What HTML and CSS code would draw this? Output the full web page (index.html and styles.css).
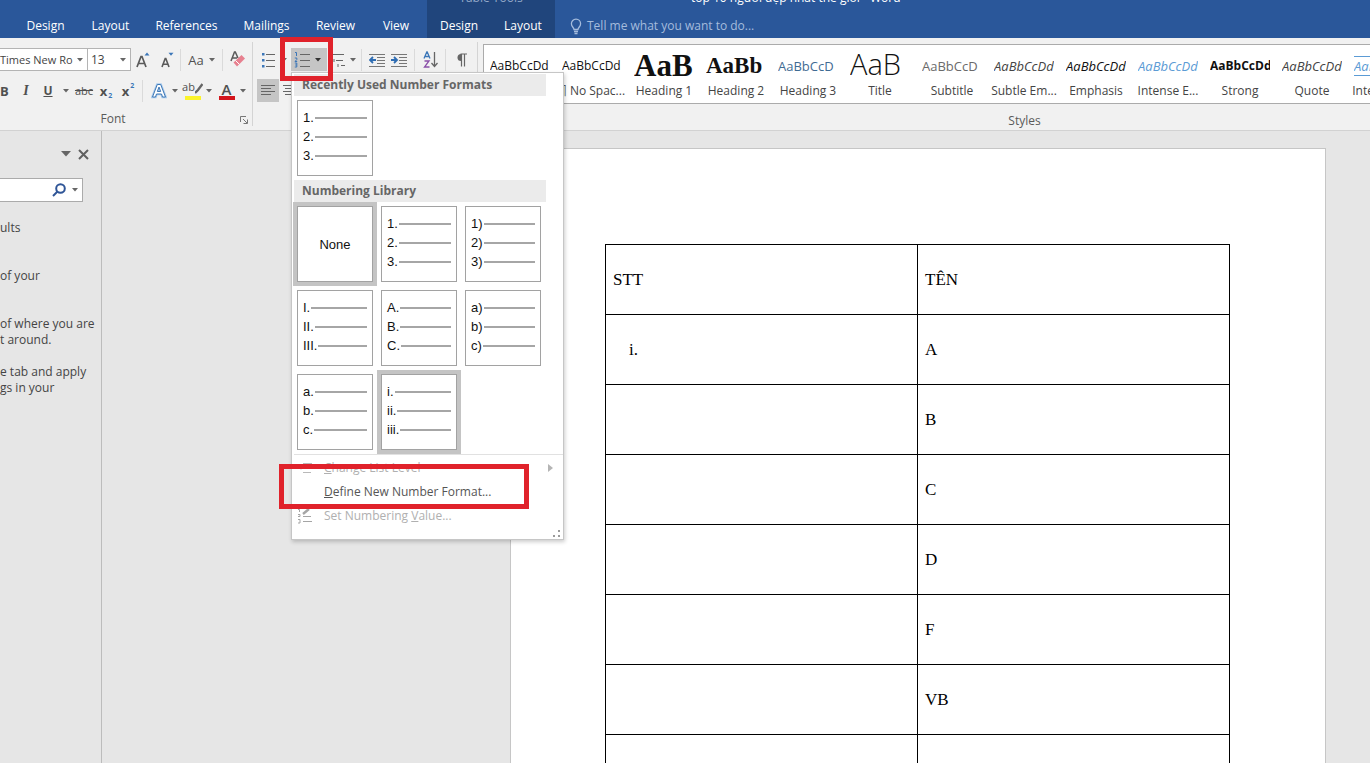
FILE: index.html
```html
<!DOCTYPE html>
<html lang="en">
<head>
<meta charset="utf-8">
<title>top 10 người đẹp nhất thế giới - Word</title>
<link rel="stylesheet" href="styles.css">
</head>
<body>
<svg class="defs" aria-hidden="true">
  <symbol id="caret" viewBox="0 0 6 4"><path d="M0 0h6L3 3.5z" fill="currentColor"/></symbol>
</svg>

<header class="titlebar">
  <nav class="tabs">
    <button class="tab">Design</button>
    <button class="tab">Layout</button>
    <button class="tab tab-xl">References</button>
    <button class="tab tab-lg">Mailings</button>
    <button class="tab">Review</button>
    <button class="tab tab-sm">View</button>
  </nav>
  <div class="context">
    <div class="cut-line context-name"><span>Table Tools</span></div>
    <div class="context-tabs">
      <button class="tab">Design</button>
      <button class="tab">Layout</button>
    </div>
  </div>
  <div class="title-area">
    <div class="cut-line doc-title"><span>top 10 người đẹp nhất thế giới - Word</span></div>
    <button class="tell-me">
      <svg width="12" height="17" viewBox="0 0 12 17" fill="none" stroke="currentColor" stroke-width="1.3"><path d="M4 11.5c0-2-2.600-2.700-2.600-5.700a4.600 4.600 0 0 1 9.200 0c0 3-2.600 3.700-2.600 5.700zM4 13.500h4M4.500 15.500h3"/></svg>
      <span>Tell me what you want to do...</span>
    </button>
  </div>
</header>

<section class="ribbon">
  <div class="group font-group">
    <div class="row">
      <label class="combo combo-font"><select aria-label="Font"><option>Times New Ro</option></select><svg class="caret"><use href="#caret"/></svg></label>
      <label class="combo combo-size"><select aria-label="Font size"><option>13</option></select><svg class="caret"><use href="#caret"/></svg></label>
      <button class="tool w24" aria-label="Grow font"><svg width="14" height="16" viewBox="0 0 14 16"><path d="M1 15 5 4.500h1L10 15M2.500 11.500h6" fill="none" stroke="#5a5a5a" stroke-width="1.700"/><path d="M8.500 3.500 11 .5l2.500 3z" fill="#3b76b8"/></svg></button>
      <button class="tool w24" aria-label="Shrink font"><svg width="14" height="16" viewBox="0 0 14 16"><path d="M2 15 5.200 6.500h.6L9 15M3 12.200h5" fill="none" stroke="#5a5a5a" stroke-width="1.600"/><path d="M8.500.8h5L11 3.800z" fill="#3b76b8"/></svg></button>
      <span class="sep"></span>
      <button class="tool w41 case">Aa<svg class="caret"><use href="#caret"/></svg></button>
      <span class="sep"></span>
      <button class="tool w30" aria-label="Clear formatting"><svg width="16" height="17" viewBox="0 0 16 17"><path d="M1 10 4.500 1h.8L8 7M2.500 7H7" fill="none" stroke="#5a5a5a" stroke-width="1.500"/><path d="m3.500 11.500 8-7.500 3.500 3.500-8 8z" fill="#e7808f"/><path d="m5.500 9.500 4 4" stroke="#fff"/></svg></button>
    </div>
    <div class="row">
      <button class="tool w15 glyph-b">B</button>
      <button class="tool w22 glyph-i">I</button>
      <button class="tool w22 glyph-u">U</button>
      <button class="tool w14" aria-label="Underline style"><svg class="caret"><use href="#caret"/></svg></button>
      <button class="tool w22 glyph-abc">abc</button>
      <button class="tool w22 glyph-x">x<sub>2</sub></button>
      <button class="tool w22 glyph-x">x<sup>2</sup></button>
      <span class="sep sep-wide"></span>
      <button class="tool w34" aria-label="Text effects"><svg width="16" height="16" viewBox="0 0 16 16"><path d="M1.500 14 6.300 1.500h3.400L14.500 14h-3l-1-3h-5l-1 3zM6.300 8.500h3.400L8 4z" fill="#fff" stroke="#a9cbee" stroke-width="2.600"/><path d="M1.500 14 6.300 1.500h3.400L14.500 14h-3l-1-3h-5l-1 3zM6.300 8.500h3.400L8 4z" fill="#fff" stroke="#3f78b5"/></svg><svg class="caret"><use href="#caret"/></svg></button>
      <button class="tool w34" aria-label="Text highlight colour"><span class="swatch yellow"><span>ab</span><svg width="8" height="12" viewBox="0 0 8 12"><path d="M7.500 2 3 8 0 11" stroke="#666" stroke-width="2.400" fill="none"/></svg></span><svg class="caret"><use href="#caret"/></svg></button>
      <button class="tool w34" aria-label="Font colour"><span class="swatch red">A</span><svg class="caret"><use href="#caret"/></svg></button>
    </div>
    <div class="caption"><span>Font</span><button class="launcher" aria-label="Font settings"><svg width="8" height="8" viewBox="0 0 8 8" fill="none" stroke="#777"><path d="M.5 6V.5H6M3 3l4 4M7.500 3.500v4h-4"/></svg></button></div>
  </div>

  <div class="group para-group">
    <div class="row">
      <button class="tool w34" aria-label="Bullets"><svg width="15" height="16" viewBox="0 0 15 16"><path d="M5 2.500h9M5 8.500h9M5 14.500h9" stroke="#666"/><path d="M1 1h2.500v2.500H1zM1 7h2.500v2.500H1zM1 13h2.500v2.500H1z" fill="#3b76b8"/></svg><svg class="caret"><use href="#caret"/></svg></button>
      <div class="numbering">
        <button class="tool pressed numbering-btn" aria-label="Numbering" aria-expanded="true"><svg width="16" height="17" viewBox="0 0 16 17"><path d="M6 3.500h10M6 9.500h10M6 15.500h10" stroke="#666"/><path d="M1 1.500h1.500V5M.8 7h2v1.500L1 10.500h2.200M.8 12h2v4H.8M1.200 14h1.500" fill="none" stroke="#3b76b8"/></svg><svg class="caret"><use href="#caret"/></svg></button>

        <div class="menu">
          <h2>Recently Used Number Formats</h2>
          <div class="formats">
            <button class="format"><span>1.</span><span>2.</span><span>3.</span></button>
          </div>
          <h2>Numbering Library</h2>
          <div class="formats">
            <button class="format none chosen">None</button>
            <button class="format"><span>1.</span><span>2.</span><span>3.</span></button>
            <button class="format"><span>1)</span><span>2)</span><span>3)</span></button>
            <button class="format"><span>I.</span><span>II.</span><span>III.</span></button>
            <button class="format"><span>A.</span><span>B.</span><span>C.</span></button>
            <button class="format"><span>a)</span><span>b)</span><span>c)</span></button>
            <button class="format"><span>a.</span><span>b.</span><span>c.</span></button>
            <button class="format chosen"><span>i.</span><span>ii.</span><span>iii.</span></button>
          </div>
          <div class="commands">
            <button class="command" disabled><svg width="16" height="12" viewBox="0 0 16 12" stroke="#b9b9b9" fill="none"><path d="M6 1.500h9M8 5.500h7M6 10.500h8M1 5.500h5M4 3.500l2 2-2 2"/></svg><span><u>C</u>hange List Level</span><svg width="5" height="8" viewBox="0 0 5 8"><path d="M0 0v8l5-4z" fill="#b5b5b5"/></svg></button>
            <button class="command"><i></i><span><u>D</u>efine New Number Format...</span></button>
            <button class="command" disabled><svg width="16" height="16" viewBox="0 0 16 16" stroke="#a5a5a5" fill="none"><path d="M1 1.500h1.500V4M1 6.500h2v2H1M1 11.500h2v3.500H1M6 8.500h8M6 13.500h9"/><path d="m6 6 6-5" stroke-width="2.400"/></svg><span>Set Numbering <u>V</u>alue...</span></button>
          </div>
          <svg class="grip" width="8" height="8" viewBox="0 0 8 8" fill="#9a9a9a"><path d="M5 0h2v2H5zM0 5h2v2H0zM5 5h2v2H5z"/></svg>
          <div class="mark mark-command"></div>
        </div>
        <div class="mark mark-button"></div>
      </div>
      <button class="tool w30" aria-label="Multilevel list"><svg width="16" height="16" viewBox="0 0 16 16" stroke="#666"><path d="M4 2.500h11M7 8.500h7M12 13.500h4M1 2.500h2M5 7v3M9 12v3"/></svg><svg class="caret"><use href="#caret"/></svg></button>
      <span class="sep"></span>
      <button class="tool w22" aria-label="Decrease indent"><svg width="16" height="14" viewBox="0 0 16 14"><path d="M0 1.500h16M8 4.500h8M8 7.500h8M8 10.500h8M0 13.500h16" stroke="#777"/><path d="M7 7H2M4 4 1 7l3 3" fill="none" stroke="#2f6db3" stroke-width="1.800"/></svg></button>
      <button class="tool w22" aria-label="Increase indent"><svg width="16" height="14" viewBox="0 0 16 14"><path d="M0 1.500h16M8 4.500h8M8 7.500h8M8 10.500h8M0 13.500h16" stroke="#777"/><path d="M0 7h5M3 4l3 3-3 3" fill="none" stroke="#2f6db3" stroke-width="1.800"/></svg></button>
      <span class="sep"></span>
      <button class="tool w22" aria-label="Sort"><svg width="15" height="17" viewBox="0 0 15 17" fill="none"><path d="M1 7.500 3.800 1h.4L7 7.500M2 5.500h4" stroke="#3b76b8" stroke-width="1.300"/><path d="M1.500 10H6l-4.500 6H6.500" stroke="#8a4fa8" stroke-width="1.300"/><path d="M11.500 1v14M8.500 12l3 3.500 3-3.500" stroke="#666" stroke-width="1.300"/></svg></button>
      <span class="sep"></span>
      <button class="tool w22" aria-label="Show marks"><svg width="11" height="14" viewBox="0 0 11 14"><path d="M5 1a3.500 3.500 0 0 0 0 7z" fill="#666"/><path d="M4.500 1H11M5.500 1v12.500M8.500 1v12.500" stroke="#666" stroke-width="1.200"/></svg></button>
    </div>
    <div class="row">
      <button class="tool w22 pressed" aria-label="Align left"><svg width="14" height="13" viewBox="0 0 14 13" stroke="#666"><path d="M0 1.500h14M0 4.500h10M0 7.500h14M0 10.500h10"/></svg></button>
      <button class="tool w22" aria-label="Center"><svg width="14" height="13" viewBox="0 0 14 13" stroke="#666"><path d="M0 1.500h14M2 4.500h10M0 7.500h14M2 10.500h10"/></svg></button>
    </div>
  </div>

  <div class="group styles-group">
    <div class="gallery">
      <button class="style"><span class="preview">AaBbCcDd</span><span>¶ Normal</span></button>
      <button class="style"><span class="preview">AaBbCcDd</span><span>¶ No Spac...</span></button>
      <button class="style"><span class="preview h1">AaB</span><span>Heading 1</span></button>
      <button class="style"><span class="preview h2">AaBb</span><span>Heading 2</span></button>
      <button class="style"><span class="preview h3">AaBbCcD</span><span>Heading 3</span></button>
      <button class="style"><span class="preview title">AaB</span><span>Title</span></button>
      <button class="style"><span class="preview subtitle">AaBbCcD</span><span>Subtitle</span></button>
      <button class="style"><span class="preview subtle">AaBbCcDd</span><span>Subtle Em...</span></button>
      <button class="style"><span class="preview emph">AaBbCcDd</span><span>Emphasis</span></button>
      <button class="style"><span class="preview intense">AaBbCcDd</span><span>Intense E...</span></button>
      <button class="style"><span class="preview strong">AaBbCcDd</span><span>Strong</span></button>
      <button class="style"><span class="preview subtle">AaBbCcDd</span><span>Quote</span></button>
      <button class="style"><span class="preview intense ruled">AaBbCcDd</span><span>Intense Q...</span></button>
    </div>
    <div class="caption">Styles</div>
  </div>
</section>

<main class="workspace">
  <aside class="pane">
    <div class="pane-head">
      <button class="plain" aria-label="Pane options"><svg width="10" height="6" viewBox="0 0 10 6"><path d="M0 0h10L5 5.500z" fill="#666"/></svg></button>
      <button class="plain" aria-label="Close pane"><svg width="11" height="11" viewBox="0 0 11 11"><path d="m1 1 9 9M10 1l-9 9" stroke="#606060" stroke-width="2"/></svg></button>
    </div>
    <div class="search">
      <input type="text" aria-label="Search document">
      <button class="plain" aria-label="Search"><svg width="14" height="14" viewBox="0 0 14 14" fill="none" stroke="#2f5597" stroke-width="2"><circle cx="8.500" cy="5.500" r="4.300"/><path d="M5.500 8.500 1 13"/></svg></button>
      <svg class="caret"><use href="#caret"/></svg>
    </div>
    <p>ults</p>
    <p class="wide">of your</p>
    <p class="wide">of where you are<br>t around.</p>
    <p>e tab and apply<br>gs in your</p>
  </aside>
  <div class="canvas">
    <article class="page">
      <table>
        <tr><td>STT</td><td>TÊN</td></tr>
        <tr><td class="item">i.</td><td>A</td></tr>
        <tr><td></td><td>B</td></tr>
        <tr><td></td><td>C</td></tr>
        <tr><td></td><td>D</td></tr>
        <tr><td></td><td>F</td></tr>
        <tr><td></td><td>VB</td></tr>
        <tr><td></td><td></td></tr>
      </table>
    </article>
  </div>
</main>
</body>
</html>
```

FILE: styles.css
```css
* { box-sizing: border-box; }

body {
  margin: 0;
  height: 100vh;
  overflow: hidden;
  display: flex;
  flex-direction: column;
  background: #e6e6e6;
  color: #444;
  font: 12px/16px "Open Sans", "Noto Sans", sans-serif;
}

button, input, select {
  font: inherit;
  color: inherit;
  background: none;
  border: 0;
  padding: 0;
  margin: 0;
}

svg { flex: none; }
.defs { display: none; }
.caret { width: 6px; height: 4px; color: #666; }

/* Title bar and tabs */
.titlebar {
  flex: none;
  height: 38px;
  display: flex;
  align-items: stretch;
  background: #2a579a;
  color: #fff;
}

.tabs { display: flex; align-items: flex-end; padding: 0 3px 0 13px; }
.tab { width: 65px; height: 24px; white-space: nowrap; }
.tab-xl { width: 87px; }
.tab-lg { width: 73px; }
.tab-sm { width: 56px; }

.context {
  width: 128px;
  display: flex;
  flex-direction: column;
  justify-content: space-between;
  background: #20457c;
}
.context-tabs { display: flex; }
.context-tabs .tab { width: 64px; }

.cut-line {
  height: 6px;
  overflow: hidden;
  display: flex;
  align-items: flex-end;
  white-space: nowrap;
}
.context-name { justify-content: center; color: #94a9c9; }

.title-area {
  flex: 1;
  display: flex;
  flex-direction: column;
  justify-content: space-between;
}
.doc-title { padding-left: 136px; }
.tell-me {
  height: 24px;
  display: flex;
  align-items: center;
  gap: 5px;
  padding-left: 15px;
  color: #a5bcdd;
}

/* Ribbon */
.ribbon {
  flex: none;
  height: 93px;
  display: flex;
  background: #f1f1f1;
  border-bottom: 1px solid #d2d2d2;
}

.group {
  display: flex;
  flex-direction: column;
  gap: 8px;
  padding-top: 10px;
  position: relative;
}
.font-group::after, .para-group::before {
  content: "";
  position: absolute;
  right: 0;
  top: 4px;
  height: 84px;
  border-right: 1px solid #d4d4d4;
}
.font-group { width: 253px; flex: none; }
.para-group { width: 225px; flex: none; padding-left: 4px; z-index: 2; }

.row { display: flex; align-items: center; height: 23px; }

.tool {
  flex: none;
  height: 23px;
  display: flex;
  align-items: center;
  justify-content: center;
  gap: 5px;
  color: #505050;
}
.w14 { width: 14px; }
.w15 { width: 15px; justify-content: flex-start; }
.w22 { width: 22px; }
.w24 { width: 24px; }
.w30 { width: 30px; }
.w34 { width: 34px; }
.w41 { width: 41px; }
.pressed { background: #c5c5c5; }
.sep { width: 1px; height: 22px; background: #dadada; }
.sep-wide { margin: 0 4px 0 3px; }
.para-group .sep { margin: 0 4px; }
.font-group .w24 + .sep { margin-left: 1px; }

.combo {
  display: grid;
  align-items: center;
  height: 23px;
  background: #fff;
  border: 1px solid #b4b4b4;
  border-left: 0;
}
.combo select {
  grid-area: 1 / 1;
  appearance: none;
  height: 21px;
  outline: 0;
}
.combo .caret { grid-area: 1 / 1; justify-self: end; margin-right: 4px; }
.combo-font { width: 88px; font-size: 11px; }
.combo-size { width: 43px; padding-left: 3px; }

.case { font-size: 13px; }
.glyph-b { font-size: 13px; font-weight: 700; }
.glyph-i { font: italic 700 14px "Liberation Serif", serif; }
.glyph-u { font-weight: 700; text-decoration: underline; }
.glyph-abc { font-size: 11px; text-decoration: line-through; }
.glyph-x { font-size: 13px; font-weight: 700; gap: 1px; }
.glyph-x sub, .glyph-x sup { font-size: 7px; line-height: 8px; color: #3b76b8; }
.glyph-x sub { align-self: flex-end; padding-bottom: 2px; height: 10px; }
.glyph-x sup { align-self: flex-start; padding-top: 3px; }

.swatch {
  width: 16px;
  height: 18px;
  display: flex;
  justify-content: center;
  border-bottom: 4px solid;
  line-height: 14px;
}
.yellow { border-color: #fbf32b; font-size: 11px; line-height: 10px; }
.red { border-color: #d3151c; font-size: 15px; font-weight: 600; }

.caption {
  display: flex;
  justify-content: center;
  align-items: center;
  position: relative;
  padding-top: 1px;
  color: #5a5a5a;
}
.font-group .caption { padding-right: 27px; }
.launcher { position: absolute; right: 5px; top: 6px; display: flex; }

/* Styles gallery */
.styles-group { flex: 0 0 1092px; padding: 6px 0 0 5px; }
.styles-group .caption { padding: 1px 4px 0 0; }
.gallery {
  height: 60px;
  display: flex;
  background: #fff;
  border: 1px solid #ababab;
}
.style {
  flex: none;
  width: 72px;
  padding: 8px 0 4px;
  display: flex;
  flex-direction: column;
  align-items: center;
  justify-content: space-between;
  white-space: nowrap;
}
.preview {
  width: 60px;
  height: 26px;
  overflow: hidden;
  text-align: left;
  line-height: 26px;
  color: #111;
}
.h1 { font: 700 31px/26px "Liberation Serif", serif; }
.h2 { font: 700 23px/26px "Liberation Serif", serif; }
.h3 { color: #3f6b93; font-size: 13px; }
.title { font-size: 29px; font-weight: 300; line-height: 22px; }
.subtitle { color: #6a6a6a; font-size: 13px; }
.subtle { color: #444; font-style: italic; font-size: 13px; }
.emph { font-style: italic; font-size: 13px; }
.intense { color: #5b9bd5; font-style: italic; font-size: 13px; }
.strong { font-weight: 700; }
.ruled { height: 20px; line-height: 18px; border: solid #5b9bd5; border-width: 1px 0; margin-top: 3px; }

/* Numbering menu */
.numbering { position: relative; }
.numbering-btn { width: 36px; justify-content: flex-start; padding-left: 3px; }
.numbering-btn .caret { color: #333; }

.menu {
  position: absolute;
  left: 0;
  top: 24px;
  width: 273px;
  padding: 1px 0 0 2px;
  background: #fff;
  border: 1px solid #c6c6c6;
  box-shadow: 1px 2px 4px rgba(0, 0, 0, .2);
}
.menu h2 {
  width: 252px;
  height: 22px;
  margin: 0;
  padding-left: 8px;
  background: #ebebeb;
  color: #666;
  font-size: 12px;
  line-height: 21px;
}
.formats {
  display: grid;
  grid-template-columns: repeat(3, 76px);
  gap: 8px;
  padding: 4px 3px;
}
.format {
  height: 76px;
  padding: 7px 5px 0;
  display: flex;
  flex-direction: column;
  background: #fff;
  border: 1px solid #a2a2a2;
  color: #111;
  font: 13px/19px "Liberation Sans", sans-serif;
}
.format span { display: flex; align-items: center; gap: 1px; width: 100%; }
.format span::after { content: ""; flex: 1; height: 2px; background: #a6a6a6; }
.none { align-items: center; justify-content: center; padding: 0; }
.chosen { outline: 4px solid #c4c4c4; }

.commands { border-top: 1px solid #e1e1e1; padding: 1px 10px 0 3px; }
.command {
  width: 100%;
  height: 24px;
  display: grid;
  grid-template-columns: 16px 1fr auto;
  gap: 11px;
  align-items: center;
  text-align: left;
  color: #555;
}
.command:disabled { color: #b0b0b0; }
.grip { display: block; margin: 2px 2px 1px auto; }

/* Callout frames */
.mark { position: absolute; border: 5px solid #e0222b; pointer-events: none; }
.mark-command { left: -13px; bottom: 30px; width: 250px; height: 45px; }
.mark-button { left: -11px; top: -11px; width: 53px; height: 44px; }

/* Workspace */
.workspace { flex: 1; min-height: 0; display: flex; overflow: hidden; }

.pane {
  flex: none;
  width: 102px;
  padding-top: 15px;
  border-right: 1px solid #bcbcbc;
  white-space: nowrap;
}
.pane-head { display: flex; justify-content: flex-end; gap: 7px; padding-right: 12px; height: 16px; align-items: center; }
.plain { display: flex; }
.search {
  width: 83px;
  height: 24px;
  margin: 16px 0 18px;
  display: flex;
  align-items: center;
  gap: 6px;
  padding-right: 4px;
  background: #fff;
  border: 1px solid #ababab;
  border-left: 0;
}
.search input { flex: 1; min-width: 0; }
.pane p { margin: 0 0 16px; }
.pane p.wide { margin-top: 32px; }

.canvas { flex: 1; display: flex; padding: 17px 44px 0 408px; }
.page {
  flex: 1;
  padding: 95px 95px 0 94px;
  background: #fff;
  border: 1px solid #c6c6c6;
  border-bottom: 0;
}
table { width: 100%; table-layout: fixed; border-collapse: collapse; }
td {
  height: 70px;
  padding: 0 7px;
  border: 1px solid #000;
  color: #000;
  font: 17px/20px "Liberation Serif", serif;
}
.item { padding-left: 23px; }
```
